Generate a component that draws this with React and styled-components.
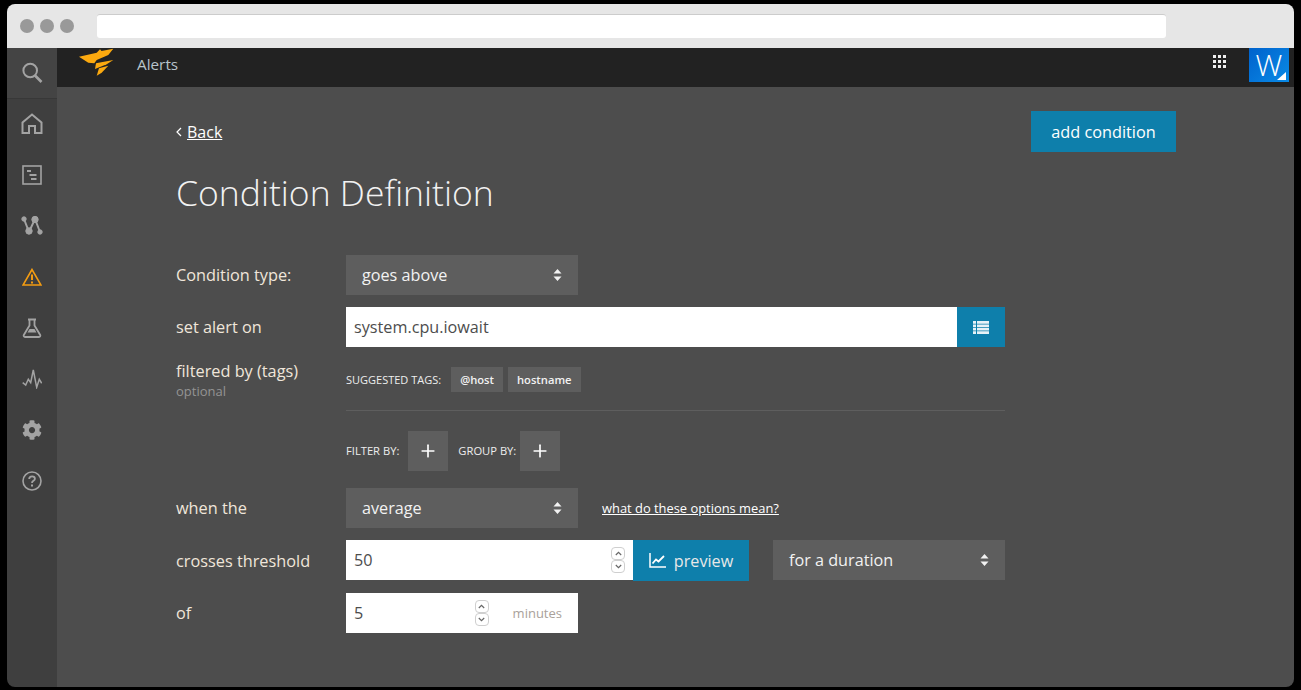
import React from 'react'
import styled, { createGlobalStyle } from 'styled-components'
import { Plus } from 'lucide-react'

const GlobalStyle = createGlobalStyle`
  html, body {
    margin: 0;
    padding: 0;
    background: #000;
  }
  body {
    font-family: 'Open Sans', sans-serif;
    overflow: hidden;
  }
`

const Frame = styled.div`
  width: 1301px;
  height: 690px;
  padding: 4px 7px;
  box-sizing: border-box;
`
const Browser = styled.div`
  height: 683px;
  border-radius: 8px;
  overflow: hidden;
  display: flex;
  flex-direction: column;
`
const ChromeBar = styled.div`
  height: 44px;
  flex: none;
  background: #e6e6e6;
  display: flex;
  align-items: center;
  padding-left: 13px;
  box-sizing: border-box;
`
const Dot = styled.span`
  width: 14px;
  height: 14px;
  border-radius: 50%;
  background: #999;
  margin-right: 6px;
`
const UrlBar = styled.div`
  width: 1069px;
  height: 24px;
  margin-left: 17px;
  background: #fff;
  border-radius: 3px;
  border-top: 1px solid #ccc;
  box-sizing: border-box;
`
const Body = styled.div`
  flex: 1;
  display: flex;
  min-height: 0;
`
const Sidebar = styled.nav`
  width: 50px;
  flex: none;
  background: #3f3f3f;
  display: flex;
  flex-direction: column;
  align-items: center;
`
const SearchCell = styled.div`
  width: 100%;
  height: 50px;
  flex: none;
  background: #444;
  border-bottom: 1px solid #383838;
  display: flex;
  align-items: center;
  justify-content: center;
  margin-bottom: -1px;
`
const NavItem = styled.div`
  width: 100%;
  height: 51px;
  flex: none;
  display: flex;
  align-items: center;
  justify-content: center;
  color: ${({ $active }) => ($active ? '#f39c12' : '#a3a3a3')};
`
const Main = styled.div`
  flex: 1;
  display: flex;
  flex-direction: column;
  background: #4d4d4d;
  min-width: 0;
`
const TopBar = styled.header`
  height: 39px;
  flex: none;
  background: #222;
  display: flex;
  align-items: center;
  padding-left: 22px;
  position: relative;
`
const Logo = styled.svg`
  width: 36px;
  height: 30px;
  position: absolute;
  left: 21px;
  top: 0;
`
const PageName = styled.span`
  margin: -8px 0 0 58px;
  font-size: 15.300px;
  color: #b8c4cc;
`
const TopRight = styled.div`
  margin-left: auto;
  display: flex;
  align-items: center;
  height: 100%;
  padding-right: 5px;
`
const Waffle = styled.div`
  display: grid;
  grid-template-columns: repeat(3, 3px);
  grid-auto-rows: 3px;
  gap: 2px;
  margin-right: 23px;
  margin-top: -13px;

  & > i {
    background: #eee;
    display: block;
  }
`
const Avatar = styled.div`
  width: 40px;
  height: 34px;
  background: linear-gradient(135deg, #0062cc, #0a8ae6);
  color: #fff;
  font-size: 30px;
  font-weight: 300;
  line-height: 34px;
  text-align: center;
  position: relative;
  align-self: flex-start;

  &::after {
    content: '';
    position: absolute;
    right: 3px;
    bottom: 2px;
    border-left: 9px solid transparent;
    border-bottom: 8px solid #fff;
  }
`
const Content = styled.div`
  padding: 24px 118px 0 119px;
  flex: 1;
`
const HeadRow = styled.div`
  display: flex;
  justify-content: space-between;
  align-items: center;
  height: 41px;
`
const BackLink = styled.a`
  display: flex;
  align-items: center;
  color: #fff;
  font-size: 16px;
  gap: 5px;

  & span {
    text-decoration: underline;
  }
`
const AddButton = styled.button`
  width: 145px;
  height: 41px;
  border: none;
  background: #0e7fab;
  color: #fff;
  font: 400 16.300px 'Open Sans', sans-serif;
`
const Title = styled.h1`
  margin: 17px 0 40px;
  font-size: 35.500px;
  line-height: 46px;
  font-weight: 300;
  color: #f2f2f2;
`
const Form = styled.div`
  width: 829px;
`
const Row = styled.div`
  display: flex;
  align-items: ${({ $top }) => ($top ? 'flex-start' : 'center')};
  min-height: 40px;
  margin-top: ${({ $gap }) => $gap ?? 12}px;
`
const Label = styled.label`
  width: 170px;
  flex: none;
  padding-top: ${({ $pt }) => $pt ?? 0}px;
  font-size: 16.300px;
  color: #f0e6da;
`
const Hint = styled.div`
  font-size: 13px;
  color: #949494;
`
const SelectBox = styled.div`
  width: ${({ $w }) => $w ?? 232}px;
  height: 40px;
  align-self: flex-start;
  margin-left: ${({ $ml }) => $ml ?? 0}px;
  padding: 0 16px;
  box-sizing: border-box;
  background: #5e5e5e;
  color: #f2f2f2;
  font-size: 16.200px;
  display: flex;
  align-items: center;
  justify-content: space-between;
`
const Caret = styled.svg`
  width: 9px;
  height: 14px;
  fill: #f2f2f2;
`
const TextField = styled.div`
  flex: ${({ $w }) => ($w ? 'none' : 1)};
  width: ${({ $w }) => ($w ? `${$w}px` : 'auto')};
  height: 40px;
  align-self: flex-start;
  padding: 0 8px;
  box-sizing: border-box;
  background: #fff;
  color: #4d4d4d;
  font-size: 16.200px;
  display: flex;
  align-items: center;
`
const Spinner = styled.div`
  margin-left: auto;
  display: flex;
  flex-direction: column;
`
const SpinBtn = styled.span`
  width: 14px;
  height: 13px;
  border: 1px solid #cfcfcf;
  border-radius: 4px;
  box-sizing: border-box;
  display: flex;
  align-items: center;
  justify-content: center;
`
const ListButton = styled.div`
  width: 48px;
  height: 40px;
  flex: none;
  background: #0e7fab;
  display: flex;
  align-items: center;
  justify-content: center;
`
const TagArea = styled.div`
  flex: 1;
  border-bottom: 1px solid #5e5e5e;
  height: 54px;
  padding-top: 10px;
  box-sizing: border-box;
  display: flex;
  align-items: flex-start;
`
const TagCaption = styled.span`
  font-size: 11px;
  line-height: 25px;
  color: #ededed;
  text-transform: uppercase;
  margin-right: 10px;
`
const Tag = styled.span`
  height: 25px;
  line-height: 25px;
  padding: 0 9px;
  margin-right: 5px;
  background: #5e5e5e;
  color: #f2f2f2;
  font-size: 11.200px;
  font-weight: 600;
`
const FilterRow = styled.div`
  display: flex;
  align-items: center;
  margin: 20px 0 0 170px;
  height: 40px;
`
const FilterCaption = styled.span`
  font-size: 11.200px;
  line-height: 40px;
  height: 40px;
  color: #ededed;
  text-transform: uppercase;
  margin-left: ${({ $ml }) => $ml ?? 0}px;
  margin-right: ${({ $mr }) => $mr ?? 9}px;
`
const AddTile = styled.div`
  width: 40px;
  height: 40px;
  background: #5e5e5e;
  color: #fff;
  display: flex;
  align-items: center;
  justify-content: center;
`
const HelpLink = styled.a`
  margin-left: 24px;
  font-size: 12.900px;
  color: #fff;
  text-decoration: underline;
`
const PreviewButton = styled.div`
  width: 116px;
  height: 41px;
  flex: none;
  align-self: flex-start;
  background: #0e7fab;
  color: #e8e8e8;
  font-size: 16.200px;
  display: flex;
  align-items: center;
  justify-content: center;
  gap: 8px;
`
const Unit = styled.span`
  margin-left: 24px;
  margin-right: 8px;
  font-size: 13px;
  color: #a9a19a;
`

const SearchIcon = () => (
  <svg width="22" height="22" viewBox="0 0 22 22" fill="none" stroke="#a3a3a3">
    <circle cx="9.200" cy="8.500" r="6.800" strokeWidth="2" />
    <path d="M14 13.500l6.500 6.500" strokeWidth="2.600" />
  </svg>
)
const HomeIcon = () => (
  <svg width="22" height="22" viewBox="0 0 22 22" fill="none" stroke="currentColor" strokeWidth="2">
    <path d="M1.500 20V9.500L11 1.500l9.500 8V20h-6.500v-7H8v7z" />
  </svg>
)
const ListBoxIcon = () => (
  <svg width="20" height="20" viewBox="0 0 20 20" fill="none" stroke="currentColor">
    <rect x="1" y="1" width="18" height="18" strokeWidth="1.600" />
    <path d="M5 6h4M7.500 10h7M9 14h5.500" strokeWidth="2" />
  </svg>
)
const NodesIcon = () => (
  <svg width="22" height="20" viewBox="0 0 22 20" fill="currentColor" stroke="currentColor">
    <path d="M3 3l5 13 6-13 5 13" fill="none" strokeWidth="2" />
    <circle cx="3" cy="3" r="2.200" />
    <circle cx="8" cy="15" r="3.200" />
    <circle cx="14" cy="3.500" r="3.200" />
    <circle cx="19" cy="16" r="2.200" />
  </svg>
)
const AlertIcon = () => (
  <svg width="20" height="18" viewBox="0 0 20 18" fill="none" stroke="currentColor">
    <path d="M10 1.500L1 17h18z" strokeWidth="1.600" />
    <path d="M10 6.500v5.500M10 13.500v2" strokeWidth="2" />
  </svg>
)
const FlaskIcon = () => (
  <svg width="20" height="20" viewBox="0 0 20 20" fill="none" stroke="currentColor" strokeWidth="1.800">
    <path d="M6 1.500h8M7.500 1.500v6L1.800 17c-.5 1 .1 2 1.200 2h14c1.100 0 1.700-1 1.200-2L12.500 7.500v-6" />
    <path d="M5.500 14.500h9l-2-3.500h-5z" fill="currentColor" stroke="none" />
  </svg>
)
const PulseIcon = () => (
  <svg width="20" height="20" viewBox="0 0 20 20" fill="none" stroke="currentColor" strokeWidth="1.500">
    <path d="M.7 13.700L3.700 16l2.600-5.700 2.400 3.400L11.300 1l3.400 17.300 2.600-8 2.400 4" />
  </svg>
)
const GearIcon = () => (
  <svg width="20" height="20" viewBox="0 0 512 512" fill="currentColor">
    <path d="M487.400 315.700l-42.600-24.600c4.300-23.200 4.300-47 0-70.200l42.600-24.600c4.900-2.800 7.100-8.600 5.500-14-11.100-35.600-30-67.800-54.700-94.600-3.800-4.100-10-5.100-14.800-2.300L380.800 110c-17.900-15.400-38.500-27.300-60.800-35.100V25.800c0-5.600-3.900-10.500-9.400-11.700-36.700-8.200-74.300-7.800-109.200 0-5.500 1.200-9.400 6.100-9.400 11.700V75c-22.200 7.900-42.800 19.800-60.800 35.100L88.700 85.500c-4.900-2.800-11-1.900-14.800 2.300-24.700 26.700-43.600 58.900-54.700 94.600-1.700 5.400.6 11.200 5.500 14L67.300 221c-4.300 23.200-4.300 47 0 70.200l-42.600 24.600c-4.900 2.800-7.100 8.600-5.500 14 11.100 35.600 30 67.800 54.700 94.600 3.800 4.100 10 5.100 14.800 2.300l42.600-24.600c17.900 15.400 38.500 27.300 60.800 35.100v49.200c0 5.600 3.900 10.500 9.400 11.700 36.700 8.200 74.300 7.800 109.200 0 5.500-1.200 9.400-6.100 9.400-11.700v-49.200c22.200-7.900 42.800-19.800 60.800-35.100l42.600 24.600c4.900 2.800 11 1.900 14.800-2.300 24.700-26.700 43.600-58.900 54.700-94.600 1.500-5.500-.7-11.300-5.600-14.100zM256 336c-44.100 0-80-35.900-80-80s35.900-80 80-80 80 35.900 80 80-35.900 80-80 80z" />
  </svg>
)
const HelpIcon = () => (
  <svg width="20" height="20" viewBox="0 0 20 20" fill="none" stroke="currentColor">
    <circle cx="10" cy="10" r="9" strokeWidth="1.600" />
    <path d="M7.200 8c0-1.700 1.200-2.700 2.900-2.700s2.800 1 2.800 2.400c0 2.300-2.900 2-2.900 4.300" strokeWidth="1.800" />
    <path d="M10 13.500v2" strokeWidth="2" />
  </svg>
)
const BackChevron = () => (
  <svg width="6" height="10" viewBox="0 0 6 10" fill="none" stroke="#fff" strokeWidth="1.200">
    <path d="M5 1L1 5l4 4" />
  </svg>
)
const UpDown = () => (
  <Caret viewBox="0 0 9 14">
    <path d="M4.500 1L8.500 5.500h-8zM4.500 13L.5 8.500h8z" />
  </Caret>
)
const Spin = () => (
  <Spinner>
    <SpinBtn>
      <svg width="7" height="5" viewBox="0 0 7 5" fill="none" stroke="#666" strokeWidth="1.200">
        <path d="M.8 4L3.500 1.300 6.200 4" />
      </svg>
    </SpinBtn>
    <SpinBtn>
      <svg width="7" height="5" viewBox="0 0 7 5" fill="none" stroke="#666" strokeWidth="1.200">
        <path d="M.8 1L3.500 3.700 6.200 1" />
      </svg>
    </SpinBtn>
  </Spinner>
)

function App() {
  return (
    <>
      <GlobalStyle />
      <Frame>
        <Browser>
          <ChromeBar>
            <Dot />
            <Dot />
            <Dot />
            <UrlBar />
          </ChromeBar>
          <Body>
            <Sidebar>
              <SearchCell>
                <SearchIcon />
              </SearchCell>
              <NavItem><HomeIcon /></NavItem>
              <NavItem><ListBoxIcon /></NavItem>
              <NavItem><NodesIcon /></NavItem>
              <NavItem $active><AlertIcon /></NavItem>
              <NavItem><FlaskIcon /></NavItem>
              <NavItem><PulseIcon /></NavItem>
              <NavItem><GearIcon /></NavItem>
              <NavItem><HelpIcon /></NavItem>
            </Sidebar>
            <Main>
              <TopBar>
                <Logo viewBox="0 0 36 30" fill="#fba90f">
                  <path d="M1 8.700L18.700 4.700 22 1.300 23.500 3 35.300.7 30.300 7 18.700 12 16.300 15.300 10.300 14.700z" />
                  <path d="M35.300 12L18 15.300 17 21 28.700 16.300z" />
                  <path d="M30.300 17.700L21 20.300 18.700 27.700 23.700 24.700z" />
                </Logo>
                <PageName>Alerts</PageName>
                <TopRight>
                  <Waffle>
                    {Array.from({ length: 9 }).map((_, i) => <i key={i} />)}
                  </Waffle>
                  <Avatar>W</Avatar>
                </TopRight>
              </TopBar>
              <Content>
                <HeadRow>
                  <BackLink>
                    <BackChevron />
                    <span>Back</span>
                  </BackLink>
                  <AddButton>add condition</AddButton>
                </HeadRow>
                <Title>Condition Definition</Title>
                <Form>
                  <Row $gap={0}>
                    <Label>Condition type:</Label>
                    <SelectBox>goes above<UpDown /></SelectBox>
                  </Row>
                  <Row>
                    <Label>set alert on</Label>
                    <TextField>system.cpu.iowait</TextField>
                    <ListButton>
                      <svg width="16" height="13" viewBox="0 0 16 13" fill="#e6f2f7">
                        <path d="M0 0h3v2.700H0zM4 0h12v2.700H4zM0 3.400h3v2.700H0zM4 3.400h12v2.700H4zM0 6.800h3v2.700H0zM4 6.800h12v2.700H4zM0 10.200h3V13H0zM4 10.200h12V13H4z" />
                      </svg>
                    </ListButton>
                  </Row>
                  <Row $top $gap={10}>
                    <Label $pt={3}>
                      filtered by (tags)
                      <Hint>optional</Hint>
                    </Label>
                    <TagArea>
                      <TagCaption>Suggested tags:</TagCaption>
                      <Tag>@host</Tag>
                      <Tag>hostname</Tag>
                    </TagArea>
                  </Row>
                  <FilterRow>
                    <FilterCaption>Filter by:</FilterCaption>
                    <AddTile><Plus size={20} strokeWidth={2} /></AddTile>
                    <FilterCaption $ml={10} $mr={4}>Group by:</FilterCaption>
                    <AddTile><Plus size={20} strokeWidth={2} /></AddTile>
                  </FilterRow>
                  <Row $gap={17}>
                    <Label>when the</Label>
                    <SelectBox>average<UpDown /></SelectBox>
                    <HelpLink>what do these options mean?</HelpLink>
                  </Row>
                  <Row>
                    <Label>crosses threshold</Label>
                    <TextField $w={287}>50<Spin /></TextField>
                    <PreviewButton>
                      <svg width="17" height="15" viewBox="0 0 17 15" fill="none" stroke="#fff" strokeWidth="1.500">
                        <path d="M1 0v14h16" />
                        <path d="M3.500 10.500l3.500-4 2.500 2L15 3" strokeWidth="1.800" />
                      </svg>
                      preview
                    </PreviewButton>
                    <SelectBox $ml={24}>for a duration<UpDown /></SelectBox>
                  </Row>
                  <Row>
                    <Label>of</Label>
                    <TextField $w={232}>
                      5<Spin />
                      <Unit>minutes</Unit>
                    </TextField>
                  </Row>
                </Form>
              </Content>
            </Main>
          </Body>
        </Browser>
      </Frame>
    </>
  )
}

export default App
